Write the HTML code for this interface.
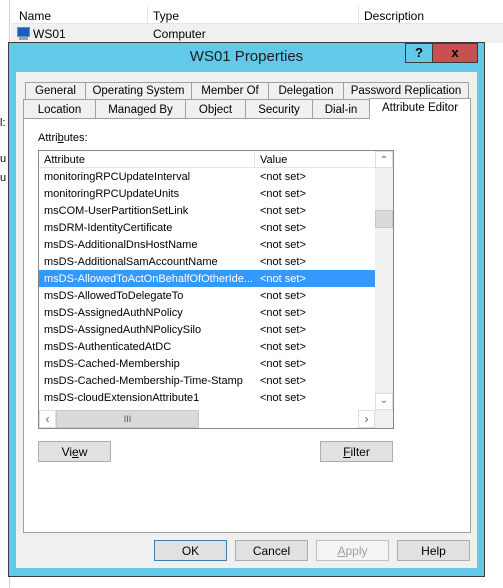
<!DOCTYPE html>
<html><head><style>
*{margin:0;padding:0;box-sizing:border-box}
body{width:503px;height:588px;position:relative;overflow:hidden;background:#fff;font-family:"Liberation Sans",sans-serif;font-size:12px;color:#000}
.a{position:absolute}
.t{position:absolute;white-space:nowrap}
.tab{position:absolute;background:#f0f0f0;border:1px solid #a0a0a0;border-bottom:none;text-align:center;font-size:11.5px;line-height:17px}
.btn{position:absolute;background:#e1e1e1;border:1px solid #adadad;text-align:center;font-size:12px;line-height:20px}
.row{position:absolute;left:39px;width:336px;height:17px;line-height:19px;font-size:11px}
.row span{position:absolute;left:5px}
.row b{font-weight:normal;position:absolute;left:221px}
</style></head><body>
<div class="a" style="left:0;top:0;width:10px;height:588px;background:#fff;border-right:1px solid #d0d0d0"></div>
<div class="a" style="left:11px;top:6px;width:492px;height:18px;background:#fff;border-bottom:1px solid #e5e5e5"></div>
<div class="a" style="left:147px;top:6px;width:1px;height:18px;background:#e5e5e5"></div>
<div class="a" style="left:358px;top:6px;width:1px;height:18px;background:#e5e5e5"></div>
<div class="t" style="left:19px;top:9px">Name</div>
<div class="t" style="left:153px;top:9px">Type</div>
<div class="t" style="left:364px;top:9px">Description</div>
<div class="a" style="left:11px;top:24px;width:492px;height:19px;background:#f0f0f0"></div>
<div class="a" style="left:17px;top:27px;width:13px;height:10px;background:#1a5fc0;border:1px solid #6a8fbf"></div>
<div class="a" style="left:19px;top:37px;width:9px;height:3px;background:#8aa"></div>
<div class="t" style="left:33px;top:27px">WS01</div>
<div class="t" style="left:153px;top:27px">Computer</div>
<div class="t" style="left:0;top:117px;font-size:11px">l:</div>
<div class="t" style="left:0;top:153px;font-size:11px">u</div>
<div class="t" style="left:0;top:172px;font-size:11px">u</div>
<div class="a" style="left:8px;top:42px;width:477px;height:535px;background:#62c9e9;border:1px solid #3b3b3b"></div>
<div class="t" style="left:0;top:48px;width:493px;text-align:center;font-size:15px;color:#1e1e1e">WS01 Properties</div>
<div class="a" style="left:405px;top:43px;width:28px;height:20px;background:#62c9e9;border:1px solid #3b3b3b;text-align:center;font-weight:bold;font-size:13px;line-height:18px">?</div>
<div class="a" style="left:432px;top:43px;width:46px;height:20px;background:#c75050;border:1px solid #3b3b3b;text-align:center;font-weight:bold;font-size:13px;line-height:17px">x</div>
<div class="a" style="left:16px;top:72px;width:461px;height:496px;background:#f0f0f0"></div>
<div class="tab" style="left:25px;top:82px;width:61px;height:17px">General</div>
<div class="tab" style="left:85px;top:82px;width:107px;height:17px">Operating System</div>
<div class="tab" style="left:191px;top:82px;width:78px;height:17px">Member Of</div>
<div class="tab" style="left:268px;top:82px;width:76px;height:17px">Delegation</div>
<div class="tab" style="left:343px;top:82px;width:126px;height:17px">Password Replication</div>
<div class="tab" style="left:23px;top:99px;width:73px;height:19px;line-height:20px">Location</div>
<div class="tab" style="left:95px;top:99px;width:91px;height:19px;line-height:20px">Managed By</div>
<div class="tab" style="left:185px;top:99px;width:61px;height:19px;line-height:20px">Object</div>
<div class="tab" style="left:245px;top:99px;width:68px;height:19px;line-height:20px">Security</div>
<div class="tab" style="left:312px;top:99px;width:58px;height:19px;line-height:20px">Dial-in</div>
<div class="a" style="left:23px;top:118px;width:448px;height:415px;background:#fff;border:1px solid #a0a0a0"></div>
<div class="tab" style="left:369px;top:98px;width:102px;height:21px;line-height:18px;background:#fff;z-index:2">Attribute Editor</div>
<div class="t" style="left:38px;top:132px;font-size:11px">Attri<u>b</u>utes:</div>
<div class="a" style="left:38px;top:150px;width:356px;height:279px;border:1px solid #828790;background:#fff"></div>
<div class="a" style="left:39px;top:151px;width:336px;height:17px;border-bottom:1px solid #e5e5e5"></div>
<div class="a" style="left:254px;top:151px;width:1px;height:17px;background:#e5e5e5"></div>
<div class="t" style="left:44px;top:154px;font-size:11px">Attribute</div>
<div class="t" style="left:260px;top:154px;font-size:11px">Value</div>
<div class="row" style="top:168px"><span>monitoringRPCUpdateInterval</span><b>&lt;not set&gt;</b></div>
<div class="row" style="top:185px"><span>monitoringRPCUpdateUnits</span><b>&lt;not set&gt;</b></div>
<div class="row" style="top:202px"><span>msCOM-UserPartitionSetLink</span><b>&lt;not set&gt;</b></div>
<div class="row" style="top:219px"><span>msDRM-IdentityCertificate</span><b>&lt;not set&gt;</b></div>
<div class="row" style="top:236px"><span>msDS-AdditionalDnsHostName</span><b>&lt;not set&gt;</b></div>
<div class="row" style="top:253px"><span>msDS-AdditionalSamAccountName</span><b>&lt;not set&gt;</b></div>
<div class="row" style="top:270px;background:#3399ff;color:#fff"><span>msDS-AllowedToActOnBehalfOfOtherIde...</span><b>&lt;not set&gt;</b></div>
<div class="row" style="top:287px"><span>msDS-AllowedToDelegateTo</span><b>&lt;not set&gt;</b></div>
<div class="row" style="top:304px"><span>msDS-AssignedAuthNPolicy</span><b>&lt;not set&gt;</b></div>
<div class="row" style="top:321px"><span>msDS-AssignedAuthNPolicySilo</span><b>&lt;not set&gt;</b></div>
<div class="row" style="top:338px"><span>msDS-AuthenticatedAtDC</span><b>&lt;not set&gt;</b></div>
<div class="row" style="top:355px"><span>msDS-Cached-Membership</span><b>&lt;not set&gt;</b></div>
<div class="row" style="top:372px"><span>msDS-Cached-Membership-Time-Stamp</span><b>&lt;not set&gt;</b></div>
<div class="row" style="top:389px"><span>msDS-cloudExtensionAttribute1</span><b>&lt;not set&gt;</b></div>
<div class="a" style="left:375px;top:151px;width:18px;height:259px;background:#f0f0f0"></div>
<div class="a" style="left:375px;top:151px;width:18px;height:17px;background:#fff;border:1px solid #ddd;text-align:center;font-size:10px;color:#606060;line-height:17px">&#8963;</div>
<div class="a" style="left:375px;top:210px;width:18px;height:18px;background:#dadada;border:1px solid #c8c8c8"></div>
<div class="a" style="left:375px;top:393px;width:18px;height:17px;background:#fff;border:1px solid #ddd;text-align:center;font-size:10px;color:#606060;line-height:14px">&#8964;</div>
<div class="a" style="left:39px;top:410px;width:336px;height:18px;background:#fff"></div>
<div class="a" style="left:39px;top:410px;width:17px;height:18px;border:1px solid #ddd;text-align:center;color:#606060;line-height:16px">&lsaquo;</div>
<div class="a" style="left:56px;top:410px;width:143px;height:18px;background:#dadada;border:1px solid #c8c8c8;text-align:center;font-size:9px;line-height:16px;color:#555">III</div>
<div class="a" style="left:358px;top:410px;width:17px;height:18px;border:1px solid #ddd;text-align:center;color:#606060;line-height:16px">&rsaquo;</div>
<div class="a" style="left:375px;top:410px;width:18px;height:18px;background:#f0f0f0"></div>
<div class="btn" style="left:38px;top:441px;width:73px;height:21px">Vi<u>e</u>w</div>
<div class="btn" style="left:320px;top:441px;width:73px;height:21px"><u>F</u>ilter</div>
<div class="btn" style="left:154px;top:540px;width:73px;height:21px;border-color:#3c7fb1">OK</div>
<div class="btn" style="left:235px;top:540px;width:73px;height:21px">Cancel</div>
<div class="btn" style="left:316px;top:540px;width:73px;height:21px;background:#f4f4f4;border-color:#bfbfbf;color:#a0a0a0"><u>A</u>pply</div>
<div class="btn" style="left:397px;top:540px;width:73px;height:21px">Help</div>
</body></html>
